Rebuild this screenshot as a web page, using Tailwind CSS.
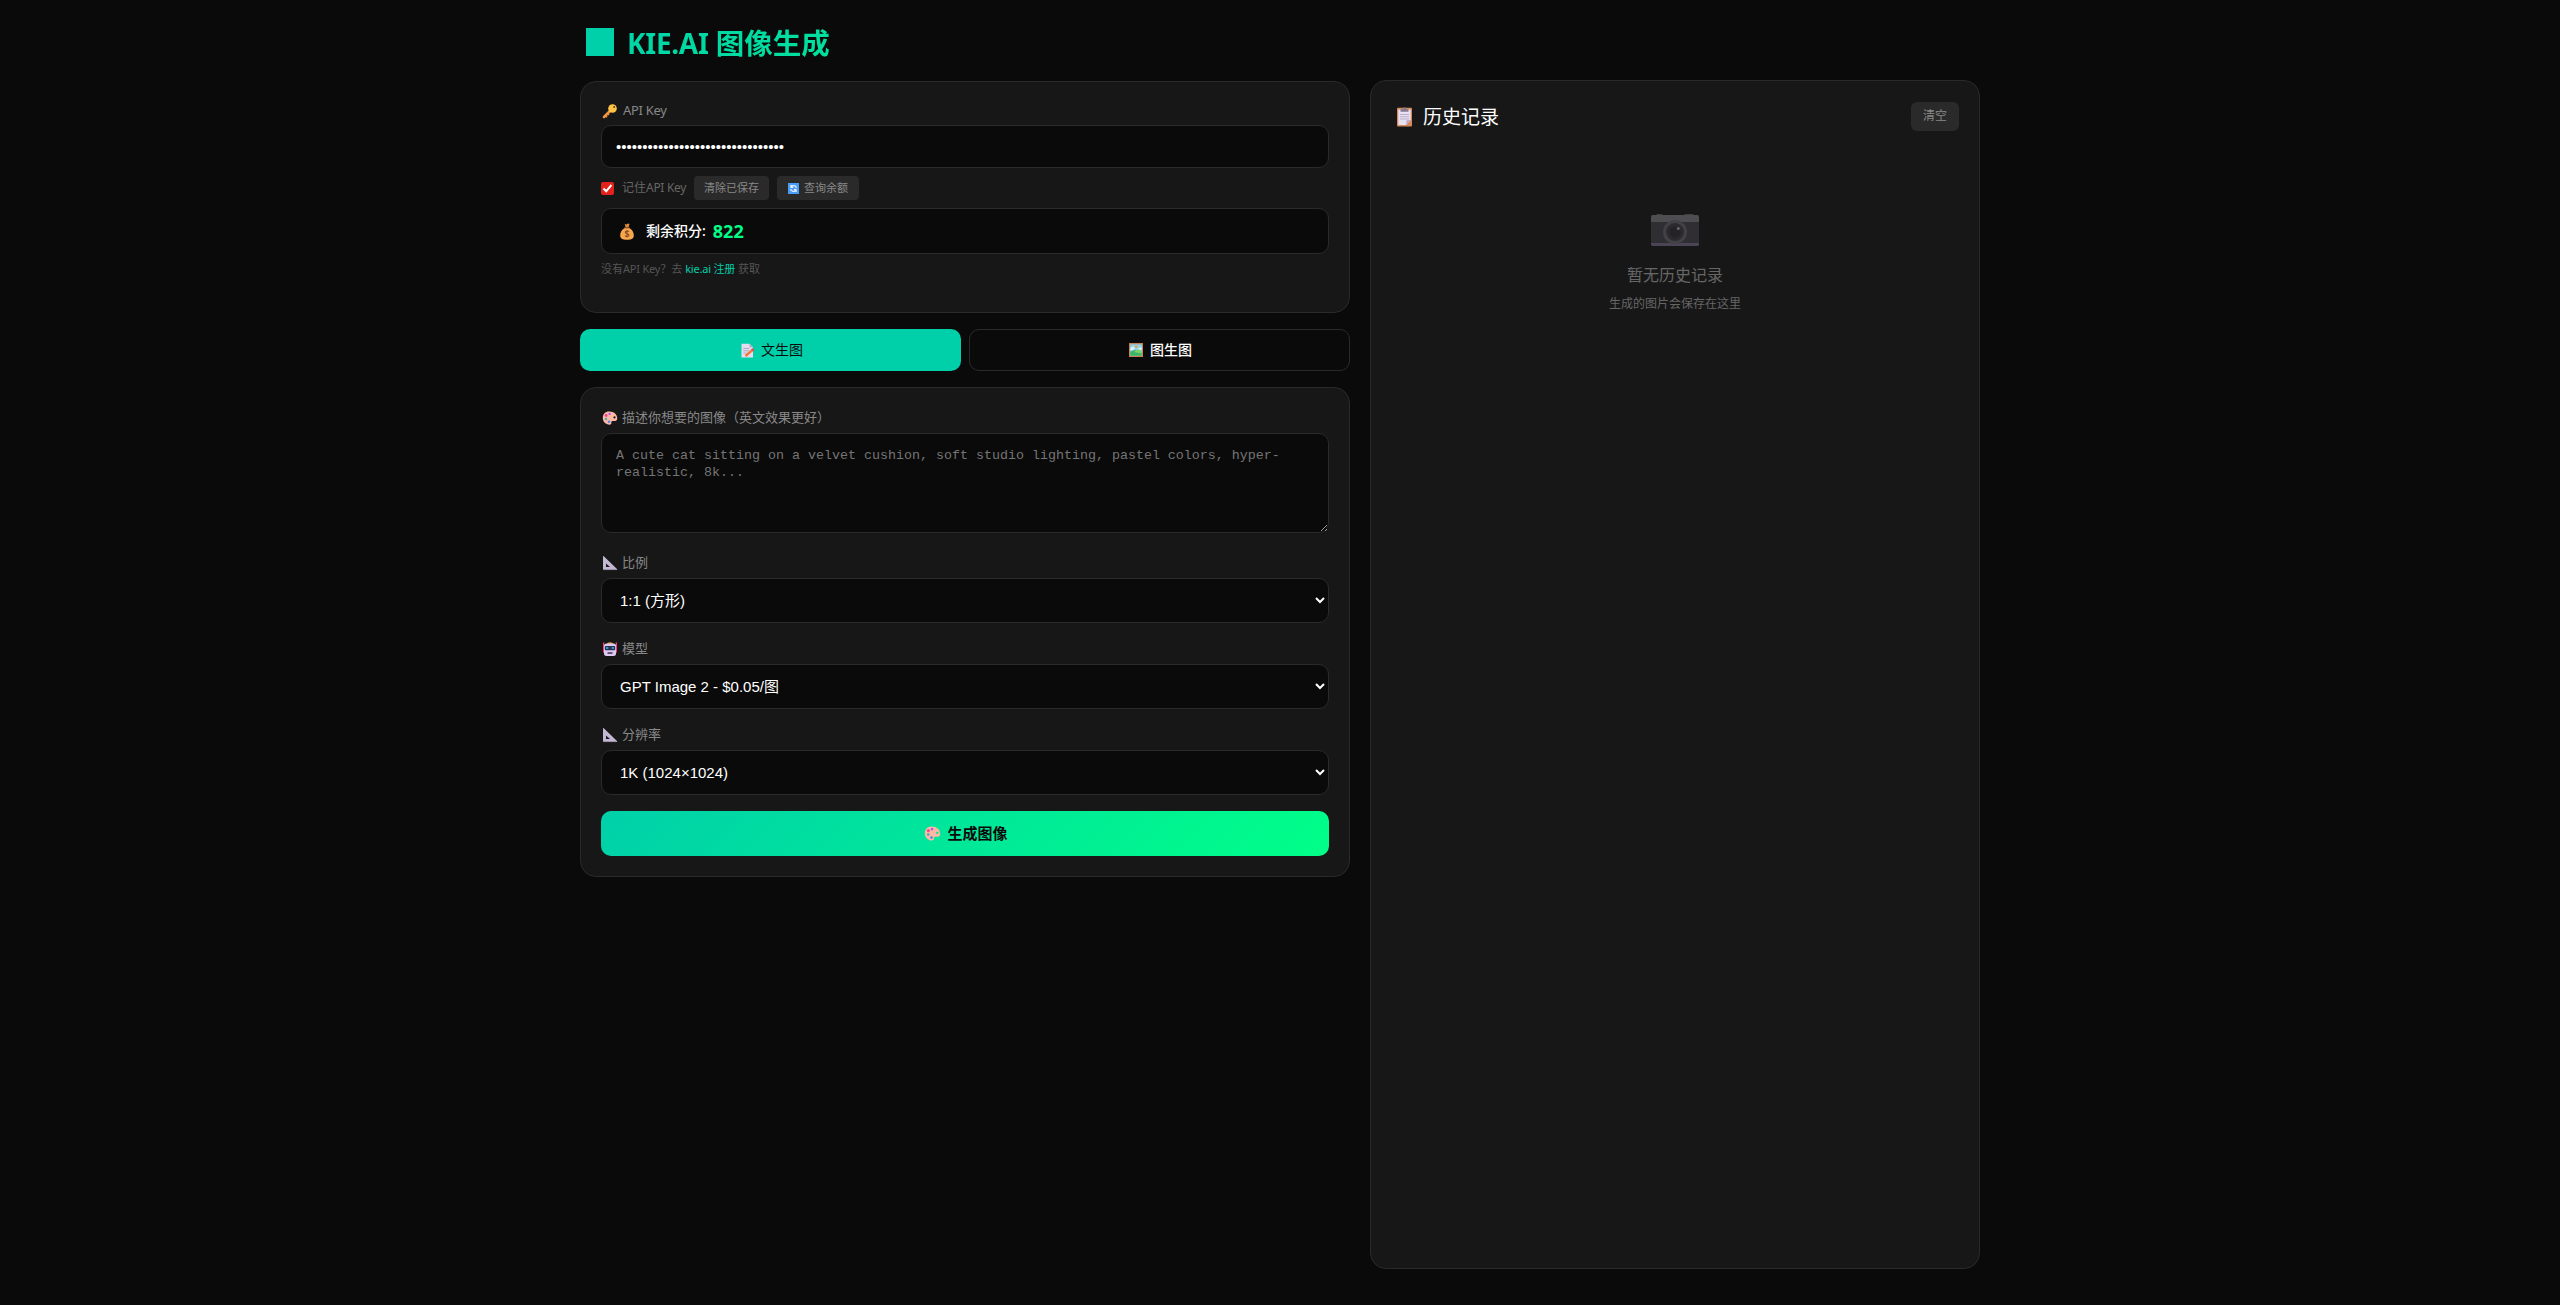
<!DOCTYPE html>
<html lang="zh-CN">
<head>
  <meta charset="UTF-8">
  <title>KIE.AI 图像生成</title>
  <script src="https://cdn.jsdelivr.net/npm/@tailwindcss/browser@4"></script>
</head>
<body class="bg-[#0a0a0a] text-white h-screen overflow-hidden font-['Noto_Sans','Noto_Sans_CJK_SC',sans-serif]">
  <!-- 图标 -->
  <svg class="hidden">
    <symbol id="palette" viewBox="0 0 16 16">
      <path fill="#ffb8a3" fill-rule="evenodd" d="M7.500 1.500C3.500 1.200.8 4 .8 7.800c0 4 3 6.800 6.700 6.900 1.600 0 2-.8 1.800-1.900-.2-1.200.6-1.800 1.700-1.800h2c1.700 0 2.400-1.500 2.200-3.300C14.900 4 11.800 1.700 7.500 1.500zM12.500 6.300a1.100 1.100 0 1 1 0 2.200 1.100 1.100 0 1 1 0-2.200z"/>
      <circle cx="7.600" cy="3.900" r="1.200" fill="#b25bea"/>
      <circle cx="4.100" cy="5.500" r="1.400" fill="#f0448a"/>
      <circle cx="4" cy="9" r="1.200" fill="#47a9b5"/>
      <circle cx="7" cy="11.800" r="1.300" fill="#4b8fe8"/>
    </symbol>
    <symbol id="ruler" viewBox="0 0 16 16">
      <path fill="#c3b7d3" fill-rule="evenodd" d="M1 1.500Q1 .6 1.800 1.200L15 14q.7 1-.4 1H2q-1 0-1-1zM4 8.500v3.500h4z"/>
      <path stroke="#8d8299" stroke-width=".8" d="M1.500 14.600h13"/>
    </symbol>
  </svg>

  <div class="w-[1400px] mx-auto flex gap-5 items-start">
    <div class="w-[770px]">
      <h1 class="h-[81px] pt-2 pb-1 flex items-center text-[28px] font-bold text-transparent bg-clip-text bg-[linear-gradient(135deg,#00d0aa,#00ff88)]">
        <span class="size-7 ml-1.5 mr-[13px] mb-0.5 bg-[#00d0aa]"></span>
        <span class="leading-9"><span class="tracking-[-0.3px]">KIE.AI</span> <span class="text-[28.500px]">图像生成</span></span>
      </h1>

      <section class="h-[232px] bg-[#171717] border border-[#2a2a2a] rounded-2xl p-5">
        <label class="flex items-center h-[17px] mb-1.5 pl-[1px] text-[13px] text-[#888]">
          <svg class="size-4 mr-[5px]" viewBox="0 0 16 16">
            <path d="M8.500 7.500 2 14" stroke="#f59440" stroke-width="2.600" stroke-linecap="round"/>
            <path d="m3.500 12.500 1.600 1.800M5.500 10.500 7 12" stroke="#f59440" stroke-width="1.400"/>
            <circle cx="10.500" cy="5.500" r="4.300" fill="#ffc444"/>
            <circle cx="12.200" cy="4" r="1" fill="#5b3a20"/>
          </svg>
          <span class="tracking-[-0.3px]">API Key</span>
        </label>
        <input type="password" value="abcdefghijklmnopqrstuvwxyz012345" class="block w-full h-[43px] px-3.5 bg-[#0a0a0a] border border-[#2a2a2a] rounded-[10px] text-[15px] font-['Liberation_Sans',sans-serif]">
        <div class="flex items-center mt-2 h-6 text-xs text-[#666]">
          <span class="size-[13px] mr-2 bg-[#e3231b] rounded-[2px]">
            <svg viewBox="0 0 13 13" fill="none" stroke="white" stroke-width="2"><path d="m2.500 6.500 2.700 2.800 5.200-6.300"/></svg>
          </span>
          <span class="w-[72px] whitespace-nowrap">记住<span class="tracking-[-0.3px]">API Key</span></span>
          <button class="w-[75px] h-6 bg-[#2a2a2a] rounded text-[11px] text-[#888]">清除已保存</button>
          <button class="flex items-center justify-center w-[82px] h-6 ml-2 bg-[#2a2a2a] rounded text-[11px] text-[#888]">
            <svg class="size-[11px] mr-[5px]" viewBox="0 0 11 11" fill="none">
              <path fill="#4a9df4" d="M0 0h11v11H0z"/>
              <path stroke="#e7f2ff" stroke-width="1.300" d="M8.300 5a2.800 2.800 0 0 0-5-1.300M2.700 6a2.800 2.800 0 0 0 5 1.300M3 2v2.300h2.200M8 9V6.700H5.800"/>
            </svg>
            查询余额
          </button>
        </div>
        <div class="flex items-center mt-2 h-[46px] pl-[17px] bg-[#0a0a0a] border border-[#2a2a2a] rounded-[10px] text-sm">
          <svg class="w-4 h-[17px] mr-[11px]" viewBox="0 0 16 17">
            <path fill="#d98e3d" d="m5.800.8 1.700.8L9 .5l1.500.6-1 3.400h-3z"/>
            <path fill="#f7a747" d="M6.200 4.800h3.600c3.600 1.700 5.200 5 5 8-.2 2.700-2 4-6.800 4s-6.600-1.300-6.800-4c-.2-3 1.400-6.300 5-8z"/>
            <path stroke="#8f4c2b" stroke-width="1.300" d="M5.500 4.700h5"/>
            <path fill="none" stroke="#8a4a2e" stroke-width="1.100" d="M10 8.700C9.500 7.800 6.300 7.600 6.300 9.300c0 1.900 3.700.9 3.700 2.900 0 1.700-3.200 1.600-4 .4M8 6.900v7.700"/>
          </svg>
          <span class="font-medium">剩余积分:</span>
          <b class="ml-[7px] text-lg text-[#00ff88]">822</b>
        </div>
        <p class="mt-[7px] h-4 leading-4 text-[11px] text-[#555]">没有<span class="tracking-[-0.2px]">API Key</span>？去 <a class="text-[#00d0aa] tracking-[-0.2px]">kie.ai 注册</a> 获取</p>
      </section>

      <div class="grid grid-cols-2 gap-2 my-4 text-sm font-medium">
        <button class="h-[42px] pl-0.5 flex items-center justify-center rounded-[10px] bg-[#00d0aa] text-[#0a0a0a] font-normal">
          <svg class="size-[15px] mr-1.5" viewBox="0 0 15 15">
            <path fill="#e4dded" d="M1.500.8h8l3.500 3.500v10.200h-11.500z"/>
            <path fill="#b5a9c4" d="M9.500.8v3.500H13z"/>
            <path stroke="#b4a8c2" d="M3.300 5.500h6M3.300 7.800h6M3.300 10h3"/>
            <path stroke="#f4763e" stroke-width="2.400" d="m5.500 13 6.500-5.700"/>
            <path stroke="#ea4b54" stroke-width="2.400" d="m11.800 7.500 1.700-1.500"/>
          </svg>
          文生图
        </button>
        <button class="h-[42px] pl-0.5 flex items-center justify-center rounded-[10px] border border-[#2a2a2a]">
          <svg class="size-3.5 mr-[7px]" viewBox="0 0 14 14">
            <path fill="#c98253" d="M0 0h14v14H0z"/>
            <path fill="#8bd5f5" d="M1.300 1.300h11.400v11.400H1.300z"/>
            <path fill="#dff3ff" d="M1.300 5 4 3.500 6 5l-2 2-2.700.5zM8 6l4.700-2v3z"/>
            <circle cx="7.200" cy="3.800" r="1.300" fill="#f5a32c"/>
            <path fill="#3db565" d="M1.300 8.500 6 7l6.700 2.500v3.200H1.300z"/>
            <path fill="#7ed36b" d="m5 9 4-3 3.700 2.500v2z"/>
          </svg>
          图生图
        </button>
      </div>

      <section class="h-[490px] bg-[#171717] border border-[#2a2a2a] rounded-2xl p-5">
        <label class="flex items-center h-5 mb-[5px] pl-[1px] text-[13px] text-[#888]">
          <svg class="size-4 mr-1"><use href="#palette"/></svg>描述你想要的图像（英文效果更好）
        </label>
        <textarea placeholder="A cute cat sitting on a velvet cushion, soft studio lighting, pastel colors, hyper-realistic, 8k..." class="block w-full h-[100px] px-3.5 py-[13px] bg-[#0a0a0a] border border-[#2a2a2a] rounded-[10px] text-[13.333px] leading-[17px] font-['Liberation_Mono',monospace] placeholder:text-[#757575] resize-y"></textarea>

        <label class="flex items-center h-5 mt-5 mb-[5px] pl-[1px] text-[13px] text-[#888]">
          <svg class="size-4 mr-1"><use href="#ruler"/></svg>比例
        </label>
        <select class="block w-full h-[45px] px-3.5 bg-[#0a0a0a] border border-[#2a2a2a] rounded-[10px] text-[15px] font-['Liberation_Sans','Noto_Sans_CJK_SC',sans-serif]">
          <option>1:1 (方形)</option>
        </select>

        <label class="flex items-center h-5 mt-4 mb-[5px] pl-[1px] text-[13px] text-[#888]">
          <svg class="size-4 mr-1" viewBox="0 0 16 16">
            <path fill="#f0447c" d="M1 1.500h1.300v4h1V12H1.500L1 10zM15 1.500h-1.300v4h-1V12h1.800l.5-2z"/>
            <path fill="#e59b36" d="M5 3.200q0-2 3-2t3 2z"/>
            <rect x="2" y="2.500" width="12" height="12.500" rx="2.500" fill="#ddc8ef"/>
            <rect x="2.800" y="5" width="10.400" height="4.200" rx="1" fill="#2c3150"/>
            <path fill="#31b9f4" d="M4 6.300h2.300v1.500H4zM9.700 6.300H12v1.500H9.700z"/>
            <rect x="5.500" y="11.300" width="5" height="1.500" fill="#3d3052"/>
          </svg>模型
        </label>
        <select class="block w-full h-[45px] px-3.5 bg-[#0a0a0a] border border-[#2a2a2a] rounded-[10px] text-[15px] font-['Liberation_Sans','Noto_Sans_CJK_SC',sans-serif]">
          <option>GPT Image 2 - $0.05/图</option>
        </select>

        <label class="flex items-center h-5 mt-4 mb-[5px] pl-[1px] text-[13px] text-[#888]">
          <svg class="size-4 mr-1"><use href="#ruler"/></svg>分辨率
        </label>
        <select class="block w-full h-[45px] px-3.5 bg-[#0a0a0a] border border-[#2a2a2a] rounded-[10px] text-[15px] font-['Liberation_Sans','Noto_Sans_CJK_SC',sans-serif]">
          <option>1K (1024×1024)</option>
        </select>

        <button class="flex items-center justify-center w-full h-[45px] mt-4 pl-0.5 rounded-[10px] bg-[linear-gradient(135deg,#00d0aa,#00ff88)] text-[15px] font-bold text-[#0a0a0a]">
          <svg class="size-[17px] mr-1.5"><use href="#palette"/></svg>生成图像
        </button>
      </section>
    </div>

    <aside class="w-[610px] h-[1189px] mt-20 bg-[#171717] border border-[#2a2a2a] rounded-2xl">
      <div class="flex items-center justify-between pt-5 px-5">
        <h2 class="flex items-center pl-[5px] pt-0.5 text-[19px] font-normal">
          <svg class="w-[17px] h-5 mr-2.5" viewBox="0 0 17 20">
            <rect x="1" y=".8" width="15" height="18.700" rx="1" fill="#d58a58"/>
            <path fill="#e8e1f3" d="M2.300 2.500h12.400V13l-4.500 5H2.300z"/>
            <path fill="#bbaacb" d="m10.200 18 .3-4.700 4.200-.3z"/>
            <path stroke="#b9adc6" d="M4 7.500h9M4 9.800h9M4 12h9"/>
            <path fill="#88798f" d="M4.500 2h2.300q.2-1.700 1.700-1.700T10.200 2h2.300v2.800h-8z"/>
          </svg>
          历史记录
        </h2>
        <button class="w-12 h-[29px] bg-[#2a2a2a] rounded-md text-xs text-[#888]">清空</button>
      </div>
      <div class="flex flex-col items-center pt-[82px] text-[#666]">
        <svg class="w-12 h-8" viewBox="0 0 48 32">
          <path fill="#414144" d="M5 1.500Q5 0 6.500 0h4Q12 0 12 1.500zM33 1.500Q33 0 34.500 0h7Q43 0 43 1.500z"/>
          <rect y="1" width="48" height="31" rx="2" fill="#2f2e32"/>
          <path fill="#4e4d50" d="M0 8V3q0-2 2-2h44q2 0 2 2v5z"/>
          <path fill="#4b4455" d="M0 29h48v1q0 2-2 2H2q-2 0-2-2z"/>
          <circle cx="24" cy="18" r="12" fill="#434145"/>
          <circle cx="24" cy="18" r="9" fill="#2c2930"/>
          <circle cx="24" cy="18" r="5.500" fill="#242127"/>
          <circle cx="27.300" cy="14.500" r="1.500" fill="#69666d"/>
        </svg>
        <p class="mt-[17px] text-base leading-6">暂无历史记录</p>
        <p class="mt-[9px] text-xs leading-4">生成的图片会保存在这里</p>
      </div>
    </aside>
  </div>
</body>
</html>
